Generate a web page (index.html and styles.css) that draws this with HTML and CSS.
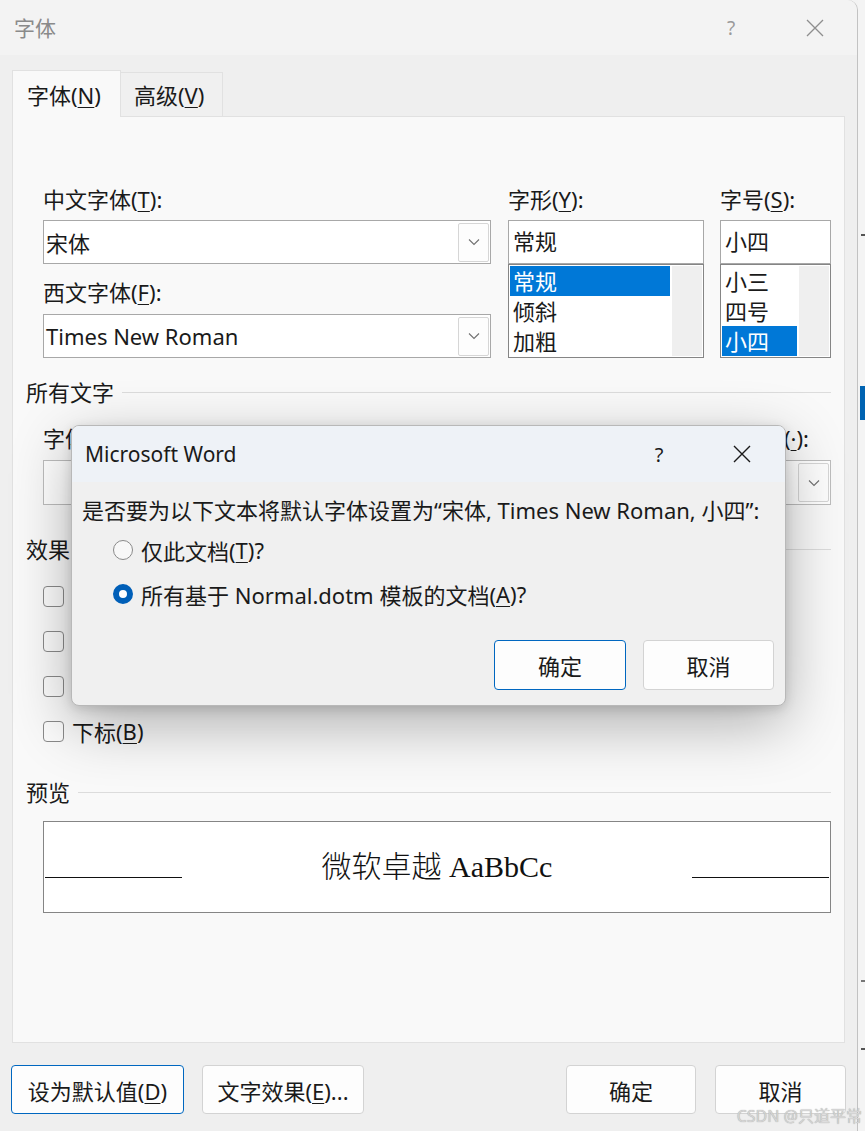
FILE: index.html
```html
<!DOCTYPE html>
<html lang="zh-CN">

<head>
    <meta charset="UTF-8">
    <meta name="viewport" content="width=device-width, initial-scale=1.0">
    <title>字体</title>
    <link rel="stylesheet" href="styles.css">
</head>

<body>
    <div class="screen">
        <div class="window">
            <!-- Title bar (inactive, the modal has focus) -->
            <div class="titlebar">
                <span class="title">字体</span>
                <span class="tb-help">?</span>
                <span class="tb-close">
                    <svg width="18" height="18" viewBox="0 0 18 18"><path d="M1 1L17 17M17 1L1 17" stroke="#8e8e8e" stroke-width="1.3" fill="none"/></svg>
                </span>
            </div>

            <div class="tabs">
                <div class="tab active">字体(<u>N</u>)</div>
                <div class="tab">高级(<u>V</u>)</div>
            </div>

            <div class="panel">
                <!-- Font names, style and size -->
                <div class="font-grid">
                    <div class="col">
                        <div class="label">中文字体(<u>T</u>):</div>
                        <div class="select wide">
                            <span class="value">宋体</span>
                            <span class="drop"><svg width="12" height="8" viewBox="0 0 12 8"><path d="M1 1.5l5 5 5-5" fill="none" stroke="#707070" stroke-width="1.1"/></svg></span>
                        </div>
                        <div class="label second">西文字体(<u>F</u>):</div>
                        <div class="select wide lower">
                            <span class="value">Times New Roman</span>
                            <span class="drop"><svg width="12" height="8" viewBox="0 0 12 8"><path d="M1 1.5l5 5 5-5" fill="none" stroke="#707070" stroke-width="1.1"/></svg></span>
                        </div>
                    </div>
                    <div class="col">
                        <div class="label">字形(<u>Y</u>):</div>
                        <div class="field style-w">常规</div>
                        <div class="listbox style-w">
                            <div class="items">
                                <div class="item selected">常规</div>
                                <div class="item">倾斜</div>
                                <div class="item">加粗</div>
                            </div>
                            <div class="track"></div>
                        </div>
                    </div>
                    <div class="col">
                        <div class="label">字号(<u>S</u>):</div>
                        <div class="field">小四</div>
                        <div class="listbox">
                            <div class="items">
                                <div class="item">小三</div>
                                <div class="item">四号</div>
                                <div class="item selected">小四</div>
                            </div>
                            <div class="track"></div>
                        </div>
                    </div>
                </div>

                <div class="section-head head-all">所有文字</div>
                <!-- middle columns sit under the modal dialog -->
                <div class="attr-grid">
                    <div>
                        <div class="label">字体颜色(<u>C</u>):</div>
                        <div class="select small"></div>
                    </div>
                    <div>
                        <div class="label"></div>
                        <div class="select small"></div>
                    </div>
                    <div>
                        <div class="label"></div>
                        <div class="select small"></div>
                    </div>
                    <div>
                        <div class="label">着重号(<u>·</u>):</div>
                        <div class="select small">
                            <span class="value"></span>
                            <span class="drop"><svg width="12" height="8" viewBox="0 0 12 8"><path d="M1 1.5l5 5 5-5" fill="none" stroke="#707070" stroke-width="1.1"/></svg></span>
                        </div>
                    </div>
                </div>

                <div class="section-head head-fx">效果</div>
                <div class="effects">
                    <div class="check"><span class="box"></span></div>
                    <div class="check"><span class="box"></span></div>
                    <div class="check"><span class="box"></span></div>
                    <div class="check"><span class="box"></span>下标(<u>B</u>)</div>
                </div>

                <div class="section-head head-pv">预览</div>
                <div class="preview">
                    <div class="pv-line"></div>
                    <div class="pv-text">微软卓越 AaBbCc</div>
                    <div class="pv-line"></div>
                </div>
            </div>

            <div class="footer">
                <button class="btn default">设为默认值(<u>D</u>)</button>
                <button class="btn fx">文字效果(<u>E</u>)...</button>
                <span class="spacer"></span>
                <button class="btn ok">确定</button>
                <button class="btn cancel">取消</button>
            </div>
        </div>

        <!-- Application behind the dialog -->
        <div class="strip">
            <div class="strip-mark m1"></div>
            <div class="strip-blue"></div>
            <div class="strip-mark m2"></div>
            <div class="strip-mark m3"></div>
        </div>

        <!-- Confirmation dialog -->
        <div class="modal">
            <div class="modal-title">
                <span class="modal-name">Microsoft Word</span>
                <span class="m-help">?</span>
                <span class="m-close">
                    <svg width="18" height="18" viewBox="0 0 18 18"><path d="M1 1L17 17M17 1L1 17" stroke="#1a1a1a" stroke-width="1.4" fill="none"/></svg>
                </span>
            </div>
            <div class="modal-body">
                <div class="question">是否要为以下文本将默认字体设置为“宋体, Times New Roman, 小四”:</div>
                <div class="radio first"><span class="dot"></span>仅此文档(<u>T</u>)?</div>
                <div class="radio"><span class="dot on"></span>所有基于 Normal.dotm 模板的文档(<u>A</u>)?</div>
                <div class="modal-buttons">
                    <button class="btn m-ok">确定</button>
                    <button class="btn m-cancel">取消</button>
                </div>
            </div>
        </div>

        <div class="watermark">CSDN @只道平常</div>
    </div>
</body>

</html>
```

FILE: styles.css
```css
* {
    box-sizing: border-box;
}

html, body {
    margin: 0;
    padding: 0;
}

body {
    width: 865px;
    height: 1131px;
    overflow: hidden;
    background: #f3f3f3;
    font-family: "Noto Sans", "Noto Sans CJK SC", sans-serif;
    font-size: 22px;
    color: #1a1a1a;
}

u {
    text-decoration-thickness: 1px;
    text-underline-offset: 3px;
}

.screen {
    position: relative;
    display: flex;
    height: 1131px;
}

.window {
    width: 858px;
    height: 1131px;
    background: #efefef;
    border-right: 1px solid #c2c2c2;
    border-top-right-radius: 10px;
    display: flex;
    flex-direction: column;
}

.titlebar {
    height: 55px;
    display: flex;
    align-items: center;
    padding-left: 14px;
    background: #f3f3f3;
    border-top-right-radius: 10px;
}

.title {
    flex: 1;
    font-size: 21px;
    line-height: 28px;
    color: #8a8a8a;
}

.tb-help {
    width: 20px;
    margin-right: 65px;
    text-align: center;
    font-size: 19px;
    color: #9a9a9a;
}

.tb-close {
    display: flex;
    margin-right: 33px;
}

.tabs {
    height: 61px;
    display: flex;
    align-items: flex-end;
    padding-left: 12px;
}

.tab {
    height: 44px;
    width: 102px;
    padding-left: 13px;
    line-height: 44px;
    background: #f0f0f0;
    border: 1px solid #e1e1e1;
    border-left: none;
    border-bottom: none;
}

.tab.active {
    position: relative;
    z-index: 1;
    height: 47px;
    width: 109px;
    padding-left: 14px;
    margin-bottom: -1px;
    line-height: 48px;
    background: #f9f9f9;
    border-left: 1px solid #e1e1e1;
}

.panel {
    height: 927px;
    margin: 0 12px;
    padding: 68px 13px 0 13px;
    background: #f9f9f9;
    border: 1px solid #e1e1e1;
}

.label {
    height: 28px;
    line-height: 28px;
    white-space: nowrap;
}

/* font names / style / size */
.font-grid {
    display: grid;
    grid-template-columns: 465px 212px 111px;
    margin-left: 17px;
}

.select {
    position: relative;
    height: 44px;
    margin-top: 7px;
    display: flex;
    align-items: center;
    padding-left: 2px;
    background: #fff;
    border: 1px solid #a8a8a8;
}

.select.wide {
    width: 448px;
}

.select.lower {
    margin-top: 8px;
}

.label.second {
    margin-top: 14px;
}

.value {
    flex: 1;
    white-space: nowrap;
}

.drop {
    width: 31px;
    height: 39px;
    margin-right: 1px;
    display: flex;
    align-items: center;
    justify-content: center;
    background: #fdfdfd;
    border: 1px solid #d6d6d6;
    border-radius: 2px;
}

.field {
    height: 44px;
    margin-top: 7px;
    padding-left: 4px;
    line-height: 40px;
    background: #fff;
    border: 1px solid #a8a8a8;
}

.style-w {
    width: 196px;
}

.listbox {
    height: 94px;
    display: flex;
    background: #fff;
    border: 1px solid #858585;
}

.items {
    flex: 1;
    padding: 1px 1px 0 1px;
}

.item {
    height: 30px;
    line-height: 30px;
    padding-left: 3px;
}

.item.selected {
    background: #0078d7;
    color: #fff;
}

.track {
    width: 30px;
    margin: 1px;
    background: #efefef;
}

/* section headings with a rule */
.section-head {
    display: flex;
    align-items: center;
    height: 28px;
    line-height: 28px;
}

.section-head::after {
    content: "";
    flex: 1;
    margin-left: 8px;
    border-top: 1px solid #dcdcdc;
}

.head-all {
    margin-top: 20px;
}

.head-fx {
    margin-top: 30px;
}

.head-pv {
    margin-top: 33px;
}

.attr-grid {
    display: grid;
    grid-template-columns: 1fr 1fr 1fr 113px;
    column-gap: 17px;
    margin: 18px 0 0 17px;
}

.select.small {
    height: 45px;
    margin-top: 8px;
    padding-left: 4px;
    border-color: #bdbdbd;
}

.effects {
    display: flex;
    flex-direction: column;
    gap: 17px;
    margin: 19px 0 0 17px;
}

.check {
    display: flex;
    align-items: center;
    height: 28px;
    white-space: nowrap;
}

.box {
    width: 21px;
    height: 21px;
    margin-right: 8px;
    background: #fbfbfb;
    border: 1px solid #8a8a8a;
    border-radius: 4px;
}

.preview {
    height: 92px;
    margin: 15px 0 0 17px;
    display: grid;
    grid-template-columns: 137px 1fr 137px;
    padding: 0 1px;
    background: #fff;
    border: 1px solid #858585;
}

.pv-line {
    height: 1px;
    margin-top: 55px;
    background: #111;
}

.pv-text {
    text-align: center;
    line-height: 90px;
    font-family: "Liberation Serif", "Noto Sans CJK SC", serif;
    font-size: 30px;
    font-weight: 300;
    color: #111;
}

/* footer buttons */
.footer {
    display: flex;
    padding: 22px 11px 0 11px;
}

.spacer {
    flex: 1;
}

.btn {
    height: 49px;
    padding: 0;
    font-family: inherit;
    font-size: 22px;
    color: #1a1a1a;
    background: #fdfdfd;
    border: 1px solid #d3d3d3;
    border-radius: 4px;
}

.btn.default {
    width: 173px;
    border-color: #0067c0;
}

.btn.fx {
    width: 162px;
    margin-left: 18px;
}

.btn.ok {
    width: 130px;
}

.btn.cancel {
    width: 131px;
    margin-left: 19px;
}

/* background app to the right */
.strip {
    flex: 1;
    background: #f4f4f4;
    display: flex;
    flex-direction: column;
    align-items: flex-end;
}

.strip-mark {
    width: 4px;
    height: 2px;
    background: #555;
}

.m1 {
    margin-top: 234px;
}

.strip-blue {
    width: 5px;
    height: 34px;
    margin-top: 150px;
    background: #0063b1;
}

.m2 {
    margin-top: 560px;
    background: #777;
}

.m3 {
    margin-top: 66px;
}

/* the modal Microsoft Word dialog */
.modal {
    position: absolute;
    left: 71px;
    top: 425px;
    width: 715px;
    height: 281px;
    overflow: hidden;
    background: #f0f0f0;
    border: 1px solid #b8b8b8;
    border-radius: 8px;
    box-shadow: 0 18px 60px rgba(0, 0, 0, 0.3), 0 3px 12px rgba(0, 0, 0, 0.14);
}

.modal-title {
    height: 56px;
    display: flex;
    align-items: center;
    padding-left: 13px;
    background: #eef2f7;
}

.modal-name {
    flex: 1;
    font-size: 21px;
}

.m-help {
    width: 20px;
    margin-right: 64px;
    text-align: center;
    font-size: 20px;
}

.m-close {
    display: flex;
    margin-right: 34px;
}

.modal-body {
    padding: 14px 11px 0 10px;
}

.question {
    height: 28px;
    line-height: 28px;
    white-space: nowrap;
}

.radio {
    display: flex;
    align-items: center;
    height: 28px;
    margin: 16px 0 0 31px;
}

.radio.first {
    margin-top: 12px;
}

.dot {
    width: 20px;
    height: 20px;
    margin-right: 8px;
    border-radius: 50%;
    background: #f8f8f8;
    border: 1px solid #8a8a8a;
}

.dot.on {
    background: #fff;
    border: 6px solid #005fb8;
}

.modal-buttons {
    display: flex;
    justify-content: flex-end;
    margin-top: 32px;
}

.btn.m-ok {
    width: 132px;
    height: 50px;
    border-color: #0067c0;
}

.btn.m-cancel {
    width: 131px;
    height: 50px;
    margin-left: 17px;
}

.watermark {
    position: absolute;
    right: 3px;
    bottom: 4px;
    font-size: 16px;
    color: #d4d4d4;
    text-shadow: 0 0 1px #9a9a9a;
}
```
